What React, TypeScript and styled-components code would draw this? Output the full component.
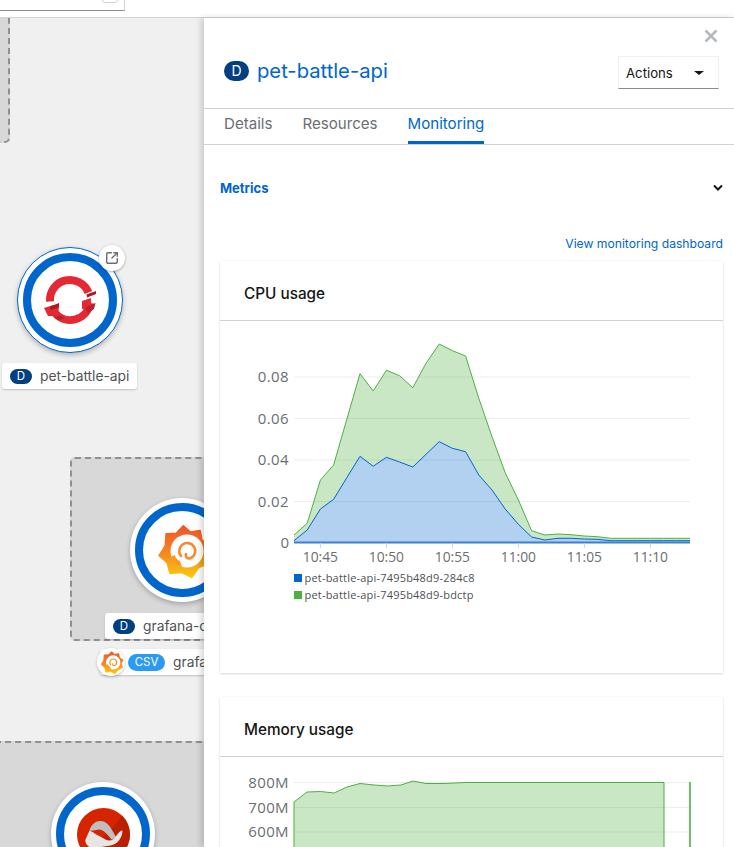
import React from "react";
import styled, { createGlobalStyle } from "styled-components";
import { SquareArrowOutUpRight } from "lucide-react";

const GlobalStyle = createGlobalStyle`
  html, body { margin: 0; padding: 0; background: #fff; }
  body { font-family: "Inter", "Liberation Sans", sans-serif; }
`;

const Page = styled.div`
  width: 734px;
  height: 847px;
  overflow: hidden;
  display: flex;
  flex-direction: column;
`;

const TopBar = styled.div`
  height: 17px;
  flex: none;
  background: #fff;
  border-bottom: 1px solid #d2d2d2;
`;

const FilterInput = styled.div`
  position: relative;
  width: 124px;
  height: 10px;
  border-right: 1px solid #d2d2d2;
  border-bottom: 1px solid #8a8d90;
  .check {
    position: absolute;
    left: 102px;
    top: -14px;
    width: 14px;
    height: 15px;
    border: 1px solid #d2d2d2;
    border-radius: 3px;
  }
`;

const Main = styled.div`
  flex: 1;
  display: flex;
  min-height: 0;
`;

const Canvas = styled.div`
  position: relative;
  flex: 0 0 204px;
  background: #f0f0f0;
  overflow: hidden;
`;

const Group = styled.div<{ $x: number; $y: number; $w: number; $h: number }>`
  position: absolute;
  left: ${p => p.$x}px;
  top: ${p => p.$y}px;
  width: ${p => p.$w}px;
  height: ${p => p.$h}px;
  box-sizing: border-box;
  background: #d8d8d8;
  border: 2px dashed #8f9092;
  border-radius: 5px;
`;

const Node = styled.div<{ $x: number; $y: number; $selected?: boolean }>`
  position: absolute;
  left: ${p => p.$x - (p.$selected ? 53 : 52)}px;
  top: ${p => p.$y - (p.$selected ? 53 : 52)}px;
  width: ${p => (p.$selected ? 106 : 104)}px;
  height: ${p => (p.$selected ? 106 : 104)}px;
  box-sizing: border-box;
  border-radius: 50%;
  background: #fff;
  border: ${p => (p.$selected ? "1.5px solid #06c" : "none")};
  box-shadow: 0 2px 5px rgba(3, 3, 3, 0.25);
  display: flex;
  align-items: center;
  justify-content: center;
`;

const Ring = styled.div`
  width: 94px;
  height: 94px;
  flex: none;
  box-sizing: border-box;
  border-radius: 50%;
  border: 8.5px solid #06c;
  display: flex;
  align-items: center;
  justify-content: center;
`;

const Decorator = styled.div`
  position: absolute;
  left: 99px;
  top: 227px;
  width: 26px;
  height: 26px;
  border-radius: 50%;
  background: #fff;
  color: #6a6e73;
  box-shadow: 0 1px 3px rgba(3, 3, 3, 0.3);
  display: flex;
  align-items: center;
  justify-content: center;
`;

const NodeLabel = styled.div<{ $x: number; $y: number }>`
  position: absolute;
  left: ${p => p.$x}px;
  top: ${p => p.$y}px;
  height: 26px;
  padding: 0 8px;
  display: flex;
  align-items: center;
  gap: 8px;
  background: #fff;
  border-radius: 3px;
  box-shadow: 0 1px 2px rgba(3, 3, 3, 0.2);
  color: #4f5255;
  font-size: 13.8px;
  white-space: nowrap;
`;

const Badge = styled.span<{ $csv?: boolean }>`
  flex: none;
  display: inline-flex;
  align-items: center;
  justify-content: center;
  width: ${p => (p.$csv ? 37 : 22)}px;
  height: ${p => (p.$csv ? 17 : 15)}px;
  border-radius: 9px;
  background: ${p => (p.$csv ? "#2b9af3" : "#004080")};
  color: #fff;
  font-size: 11.5px;
`;

const BadgeGap = styled.span`
  width: 12px;
  flex: none;
`;

const LogoBubble = styled.div`
  position: absolute;
  left: 97px;
  top: 630px;
  width: 28px;
  height: 28px;
  border-radius: 50%;
  background: #fff;
  box-shadow: 0 1px 3px rgba(3, 3, 3, 0.25);
  display: flex;
  align-items: center;
  justify-content: center;
`;

const Panel = styled.div`
  flex: 1;
  min-width: 0;
  position: relative;
  background: #fff;
  box-shadow: -3px 0 6px rgba(3, 3, 3, 0.16);
  display: flex;
  flex-direction: column;
  overflow: hidden;
`;

const PanelHead = styled.div`
  height: 91px;
  flex: none;
  box-sizing: border-box;
  padding: 0 15px 0 20px;
  border-bottom: 1px solid #d2d2d2;
  display: flex;
  align-items: center;
  justify-content: space-between;
`;

const CloseX = styled.div`
  position: absolute;
  top: 11px;
  right: 16px;
  color: #b8bbbe;
  display: flex;
`;

const Title = styled.div`
  display: flex;
  align-items: center;
  gap: 8px;
  margin-top: 15px;
  color: #06c;
  font-size: 20.2px;
  font-weight: 400;
`;

const TitleBadge = styled.span`
  width: 25px;
  height: 20px;
  border-radius: 10px;
  background: #004080;
  color: #fff;
  font-size: 14px;
  display: flex;
  align-items: center;
  justify-content: center;
`;

const Actions = styled.div`
  width: 101px;
  height: 33px;
  margin-top: 19px;
  box-sizing: border-box;
  padding: 0 14px 0 7px;
  border: 1px solid #f0f0f0;
  border-bottom-color: #8a8d90;
  display: flex;
  align-items: center;
  justify-content: space-between;
  font-size: 13.2px;
  color: #151515;
  i {
    width: 0;
    height: 0;
    border-left: 5px solid transparent;
    border-right: 5px solid transparent;
    border-top: 4px solid #151515;
  }
`;

const Tabs = styled.div`
  height: 36px;
  flex: none;
  box-sizing: border-box;
  padding-left: 20px;
  border-bottom: 1px solid #d2d2d2;
  display: flex;
  gap: 30px;
`;

const Tab = styled.div<{ $active?: boolean }>`
  height: 35px;
  box-sizing: border-box;
  padding-top: 5px;
  font-size: 15.1px;
  color: ${p => (p.$active ? "#06c" : "#6a6e73")};
  border-bottom: 3px solid ${p => (p.$active ? "#06c" : "transparent")};
`;

const PanelBody = styled.div`
  padding: 0 11px 0 16px;
`;

const Section = styled.div`
  height: 87px;
  box-sizing: border-box;
  padding-bottom: 2px;
  display: flex;
  align-items: center;
  justify-content: space-between;
  color: #06c;
  font-size: 13px;
  font-weight: 700;
`;

const DashLink = styled.div`
  text-align: right;
  font-size: 12.15px;
  line-height: 16px;
  height: 16px;
  margin: 4px 0 9px;
  color: #06c;
`;

const Card = styled.div<{ $height: number }>`
  height: ${p => p.$height}px;
  margin-bottom: 24px;
  background: #fff;
  box-shadow: 0 1px 2px rgba(3, 3, 3, 0.14), 0 0 2px rgba(3, 3, 3, 0.06);
`;

const CardTitle = styled.div`
  height: 60px;
  box-sizing: border-box;
  padding: 23px 24px 0;
  border-bottom: 1px solid #d2d2d2;
  font-size: 15.3px;
  font-weight: 500;
  color: #151515;
`;

const ChartSvg = styled.svg`
  display: block;
  text {
    font-family: "Open Sans", "Liberation Sans", sans-serif;
    fill: #6a6e73;
  }
`;

const AXIS_X = 294;
const STEP = 13.2;
const BASE = 542.7;

// sampled per minute from 10:43, y in page pixels
const greenCpu = [615, 580, 450, 405, 268, 131, 183, 121, 137, 173, 100, 42, 62, 78, 205, 320, 428, 510, 602, 615, 612, 614, 618, 620, 625, 625, 625, 625, 625, 625, 625].map(v => 330 + v / 3);
const blueCpu = [632, 600, 537, 508, 443, 379, 409, 382, 396, 411, 373, 335, 355, 365, 435, 480, 537, 583, 621, 630, 625, 625, 627, 628, 632, 632, 632, 632, 632, 632, 632].map(v => 330 + v / 3);

const toPoints = (ys: number[]) => ys.map((y, i) => [AXIS_X + i * STEP, y]);
const line = (ys: number[]) => toPoints(ys).map(([x, y]) => `${x.toFixed(1)},${y.toFixed(1)}`).join(" ");
const area = (ys: number[]) => `${AXIS_X},${BASE} ${line(ys)} ${AXIS_X + (ys.length - 1) * STEP},${BASE}`;
// band between the two stacked series
const band = (top: number[], bottom: number[]) =>
  `${line(top)} ${toPoints(bottom).reverse().map(([x, y]) => `${x.toFixed(1)},${y.toFixed(1)}`).join(" ")}`;

const memPoints = "294,802 307,792 320.5,791.5 334,793 347,787 360,783.5 374,785 387.5,786 401,785 413,781 426,783.5 444,783.5 465,782.5 664,782.5";

function CpuChart() {
  const grid = [[0.08, 377], [0.06, 418.5], [0.04, 460], [0.02, 501.5]];
  const ticks = [["10:45", 320.4], ["10:50", 386.4], ["10:55", 452.4], ["11:00", 518.4], ["11:05", 584.4], ["11:10", 650.4]] as const;
  return (
    <ChartSvg width={503} height={352} viewBox="220 321 503 352">
      {grid.map(([label, y]) => (
        <g key={label}>
          <line x1={AXIS_X} x2={690} y1={y} y2={y} stroke="#ededed" />
          <text x={289} y={y + 5} fontSize={15} letterSpacing={0.4} textAnchor="end">{label}</text>
        </g>
      ))}
      <text x={289} y={548} fontSize={15} textAnchor="end">0</text>
      <polygon points={band(greenCpu, blueCpu)} fill="#4cb140" fillOpacity={0.3} />
      <polygon points={area(blueCpu)} fill="#06c" fillOpacity={0.3} />
      <polyline points={line(greenCpu)} fill="none" stroke="#4cb140" strokeWidth={1} />
      <polyline points={line(blueCpu)} fill="none" stroke="#06c" strokeWidth={1} />
      <line x1={AXIS_X} x2={690} y1={542.5} y2={542.5} stroke="#3f7fd0" strokeWidth={2} />
      {ticks.map(([label, x]) => (
        <g key={label}>
          <line x1={x} x2={x} y1={543} y2={548} stroke="#d2d2d2" />
          <text x={x} y={562} fontSize={13.8} textAnchor="middle">{label}</text>
        </g>
      ))}
      <rect x={294} y={574} width={8} height={8} fill="#06c" />
      <text x={304.5} y={582} fontSize={11} letterSpacing={0.2} style={{ fill: "#4f5255" }}>pet-battle-api-7495b48d9-284c8</text>
      <rect x={294} y={591} width={8} height={8} fill="#4cb140" />
      <text x={304.5} y={599} fontSize={11} letterSpacing={0.2} style={{ fill: "#4f5255" }}>pet-battle-api-7495b48d9-bdctp</text>
    </ChartSvg>
  );
}

function MemoryChart() {
  const grid = [["800M", 782.5], ["700M", 807.5], ["600M", 832]] as const;
  return (
    <ChartSvg width={503} height={92} viewBox="220 757 503 92">
      {grid.map(([label, y]) => (
        <g key={label}>
          <line x1={AXIS_X} x2={690} y1={y} y2={y} stroke="#ededed" />
          <text x={289} y={y + 5} fontSize={15} letterSpacing={0.4} textAnchor="end">{label}</text>
        </g>
      ))}
      <polygon points={`294,860 ${memPoints} 664,860`} fill="#4cb140" fillOpacity={0.3} />
      <polyline points={`294,860 ${memPoints} 664,860`} fill="none" stroke="#4cb140" strokeWidth={1} />
      <line x1={690} x2={690} y1={782} y2={860} stroke="#6cc162" strokeWidth={2} />
    </ChartSvg>
  );
}

function OpenShiftLogo() {
  return (
    <svg width={60} height={60} viewBox="-30 -30 60 60">
      <g fill="none" stroke="#e52934" strokeWidth={8}>
        <path d="M-20 1.5A20 20 0 0 1 18.5 -7.5" />
        <path d="M20 3A20 20 0 0 1 -15 13" />
      </g>
      <polygon points="-26,8 -16.5,5 -11,6.5 -12,16 -22,16" fill="#e52934" />
      <polygon points="12,1 21,-2 21,8 12,9" fill="#e52934" />
      <polygon points="-20,6.5 -11,3 -11,7 -19.5,10.2" fill="#a81a24" />
      <polygon points="16.5,-5.5 26,-9 26,-6 17,-2.5" fill="#a81a24" />
      <polygon points="-16,17 -9,15.5 -5,18 -11,20.5" fill="#b8222c" />
      <polygon points="15,7.5 25.5,3 24,9 18,13" fill="#b8222c" />
    </svg>
  );
}

const gearTeeth = [-94, -55, -15, 25, 75, 125, 172, -136];

const gearPath = () => {
  const pts: string[] = [];
  gearTeeth.forEach((deg, i) => {
    const next = gearTeeth[(i + 1) % gearTeeth.length];
    const gap = ((next - deg + 360) % 360) / 2;
    const polar = (a: number, r: number) => `${(r * Math.cos((a * Math.PI) / 180)).toFixed(1)} ${(r * Math.sin((a * Math.PI) / 180)).toFixed(1)}`;
    pts.push(polar(deg, 26), polar(deg + gap, 20.5));
  });
  return `M${pts.join("L")}Z`;
};

function GrafanaLogo({ size, id }: { size: number; id: string }) {
  return (
    <svg width={size} height={size} viewBox="-33 -32 60 60">
      <defs>
        <linearGradient id={id} x1="0" x2="0" y1="0" y2="1">
          <stop offset="0" stopColor="#f0552c" />
          <stop offset="0.55" stopColor="#f58a1f" />
          <stop offset="1" stopColor="#fcc80e" />
        </linearGradient>
      </defs>
      <path d={gearPath()} fill={`url(#${id})`} stroke={`url(#${id})`} strokeWidth={2} strokeLinejoin="round" />
      <circle cx={2} cy={-1} r={16.5} fill="#fff" />
      <path d="M-14.5 5C-12 10 -8 13.5 -3 15L-5 9C-8 8 -10 5 -10 3Z" fill="#f89b1c" />
      <path d="M-4 4A8 8 0 1 1 6 6C3 7.5 0 5 1 2" fill="none" stroke="#f58a2a" strokeWidth={2.6} strokeLinecap="round" />
    </svg>
  );
}

function RibbonLogo() {
  return (
    <svg width={53} height={53} viewBox="-26.5 -26.5 53 53">
      <circle r={26.5} fill="#d62400" />
      <path d="M18.7 -18.7A26.5 26.5 0 0 1 18.7 18.7L-18 18.7L7 -4Z" fill="#bb1f00" />
      <path d="M-14 -4C-12 -12 -5 -15 0 -13C6 -11 9 -3 13 3L8 5C4 0 1 -4 -4 -5C-8 -5 -11 -3 -14 -4Z" fill="#bfbfbf" />
      <path d="M-14 -4C-10 -2 -4 2 2 5C6 7 10 6 13 1C15 -2 17 -4 19 -4C19 3 14 10 7 11C0 12 -5 13 -12 14C-16 12 -19 8 -18 5Z" fill="#e6e6e6" />
    </svg>
  );
}

export default function App() {
  return (
    <Page>
      <GlobalStyle />
      <TopBar>
        <FilterInput><span className="check" /></FilterInput>
      </TopBar>
      <Main>
        <Canvas>
          <Group $x={-100} $y={-20} $w={110} $h={145} />
          <Group $x={70} $y={439} $w={200} $h={184} />
          <Group $x={-20} $y={723} $w={300} $h={200} />

          <Node $x={69.5} $y={282} $selected>
            <Ring><OpenShiftLogo /></Ring>
          </Node>
          <Decorator><SquareArrowOutUpRight size={14} strokeWidth={2.4} /></Decorator>
          <NodeLabel $x={2} $y={345}><Badge>D</Badge>pet-battle-api</NodeLabel>

          <Node $x={182} $y={532}>
            <Ring><GrafanaLogo size={60} id="grafana-large" /></Ring>
          </Node>
          <NodeLabel $x={105} $y={595}><Badge>D</Badge>grafana-operator</NodeLabel>
          <NodeLabel $x={100} $y={631}>
            <BadgeGap />
            <Badge $csv>CSV</Badge>grafana-operator
          </NodeLabel>
          <LogoBubble><GrafanaLogo size={26} id="grafana-small" /></LogoBubble>

          <Node $x={103} $y={816}>
            <Ring><RibbonLogo /></Ring>
          </Node>
        </Canvas>
        <Panel>
          <CloseX>
            <svg width={14} height={14} viewBox="0 0 14 14">
              <path d="M1.5 1.5L12.5 12.5M12.5 1.5L1.5 12.5" stroke="currentColor" strokeWidth={2.6} />
            </svg>
          </CloseX>
          <PanelHead>
            <Title><TitleBadge>D</TitleBadge>pet-battle-api</Title>
            <Actions>Actions<i /></Actions>
          </PanelHead>
          <Tabs>
            <Tab>Details</Tab>
            <Tab>Resources</Tab>
            <Tab $active>Monitoring</Tab>
          </Tabs>
          <PanelBody>
            <Section>
              Metrics
              <svg width={10} height={8} viewBox="0 0 10 8">
                <path d="M1 1.5L5 5.5L9 1.5" fill="none" stroke="#151515" strokeWidth={2} />
              </svg>
            </Section>
            <DashLink>View monitoring dashboard</DashLink>
            <Card $height={412}>
              <CardTitle>CPU usage</CardTitle>
              <CpuChart />
            </Card>
            <Card $height={200}>
              <CardTitle>Memory usage</CardTitle>
              <MemoryChart />
            </Card>
          </PanelBody>
        </Panel>
      </Main>
    </Page>
  );
}
